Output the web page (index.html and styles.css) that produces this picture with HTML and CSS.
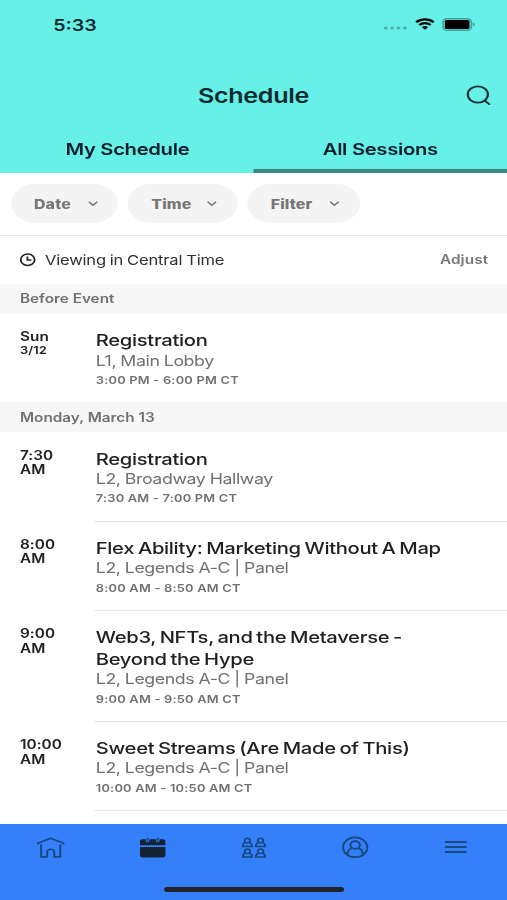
FILE: index.html
```html
<!DOCTYPE html>
<html lang="en">
<head>
<meta charset="utf-8">
<title>Schedule</title>
<link rel="stylesheet" href="styles.css">
</head>
<body>
<div class="app">
  <header class="header">
    <div class="status">
      <span class="clock">5:33</span>
      <span class="signals">
        <svg class="dots" width="20" height="4" viewBox="0 0 20 4"><g fill="#4aaeaa"><circle cx="2" cy="2" r="1.6"/><circle cx="7.2" cy="2" r="1.6"/><circle cx="12.4" cy="2" r="1.6"/><circle cx="17.6" cy="2" r="1.6"/></g></svg>
        <svg class="wifi" width="16" height="12" viewBox="0 0 16 12"><g fill="none" stroke="#000" stroke-width="2.1"><path d="M.8 4.3a10.3 10.3 0 0 1 14.4 0"/><path d="M3.4 7a6.6 6.6 0 0 1 9.2 0"/></g><path d="M8 11.8 5.5 9.2a3.7 3.7 0 0 1 5 0z"/></svg>
        <svg class="battery" width="27" height="13" viewBox="0 0 27 13"><rect x=".7" y=".7" width="23.2" height="11.6" rx="3.6" fill="none" stroke="#3fa09d" stroke-width="1.4"/><rect x="2.2" y="2" width="20.2" height="9" rx="1.6"/><path d="M25.2 4.6v3.8q1.4-.7 1.4-1.9t-1.4-1.9z" fill="#3fa09d"/></svg>
      </span>
    </div>
    <div class="titlebar">
      <h1>Schedule</h1>
      <svg class="search" width="22" height="22" viewBox="0 0 22 22" fill="none" stroke="#14302f" stroke-width="1.8" stroke-linecap="round"><circle cx="10.2" cy="9.5" r="8.2"/><path d="m15.5 15.4 4 3.7"/></svg>
    </div>
    <nav class="tabs"><span class="tab my">My Schedule</span><span class="tab all">All Sessions</span></nav>
  </header>
  <div class="filters">
    <span class="pill date">Date<svg width="8" height="6" viewBox="0 0 8 6"><path d="m.5.7 3.5 3.6L7.5.7"/></svg></span>
    <span class="pill time-filter">Time<svg width="8" height="6" viewBox="0 0 8 6"><path d="m.5.7 3.5 3.6L7.5.7"/></svg></span>
    <span class="pill more">Filter<svg width="8" height="6" viewBox="0 0 8 6"><path d="m.5.7 3.5 3.6L7.5.7"/></svg></span>
  </div>
  <div class="zone">
    <svg width="14" height="14" viewBox="0 0 14 14" fill="none" stroke="#222" stroke-width="1.5"><circle cx="6.6" cy="6.7" r="5.7"/><path d="M6.4 3.5v3.6h3.2"/></svg>
    <span class="zone-name">Viewing in Central Time</span><span class="adjust">Adjust</span>
  </div>
  <h2>Before Event</h2>
  <article class="session first">
    <div class="when">Sun<small>3/12</small></div>
    <div class="info"><h3>Registration</h3><p class="place">L1, Main Lobby</p><p class="hours">3:00 PM - 6:00 PM CT</p></div>
  </article>
  <h2 class="monday">Monday, March 13</h2>
  <article class="session">
    <div class="when">7:30<br>AM</div>
    <div class="info"><h3>Registration</h3><p class="place">L2, Broadway Hallway</p><p class="hours">7:30 AM - 7:00 PM CT</p></div>
  </article>
  <article class="session ruled">
    <div class="when">8:00<br>AM</div>
    <div class="info"><h3>Flex Ability: Marketing Without A Map</h3><p class="place">L2, Legends A-C | Panel</p><p class="hours">8:00 AM - 8:50 AM CT</p></div>
  </article>
  <article class="session ruled long">
    <div class="when">9:00<br>AM</div>
    <div class="info"><h3>Web3, NFTs, and the Metaverse -<br>Beyond the Hype</h3><p class="place">L2, Legends A-C | Panel</p><p class="hours">9:00 AM - 9:50 AM CT</p></div>
  </article>
  <article class="session ruled">
    <div class="when">10:00<br>AM</div>
    <div class="info"><h3>Sweet Streams (Are Made of This)</h3><p class="place">L2, Legends A-C | Panel</p><p class="hours">10:00 AM - 10:50 AM CT</p></div>
  </article>
  <div class="session ruled next"><div class="when"></div><div class="info"></div></div>
  <footer class="bottom">
    <div class="icons">
      <svg width="28" height="24" viewBox="0 0 28 24" fill="none" stroke="#194780" stroke-width="1.6" stroke-linejoin="round"><path d="M6.6 8.2v12.7h4.9v-4.9a2.9 2.7 0 0 1 5.8 0v4.9h4.9V8.2M4 8.6V7.1L14.4 2.2l10.4 4.9v1.5"/></svg>
      <svg width="28" height="24" viewBox="0 0 28 24" fill="#152231"><path d="M4.3 9.3V5q0-1.8 1.8-1.8h2.9v1.6a1.5 1.8 0 0 0 3 0V3.2h5.4v1.6a1.5 1.8 0 0 0 3 0V3.2h2.9q1.8 0 1.8 1.8v4.3zM4.3 11.1h20.8v8.5q0 1.8-1.8 1.8H6.1q-1.8 0-1.8-1.8z"/><path d="M10.5 2.3v3M18.9 2.3v3" stroke="#194780" stroke-width="1.5" stroke-linecap="round"/></svg>
      <svg width="28" height="24" viewBox="0 0 28 24"><defs><g id="person" fill="none" stroke="#194780" stroke-width="1.5"><circle cx="4.7" cy="3.3" r="2.3"/><path d="M3.1 5.1Q.9 6 .9 9.2h7.6Q8.5 6 6.3 5.1"/></g></defs><use href="#person" x="4.3" y="1.3"/><use href="#person" x="15" y="1.3"/><use href="#person" x="4.3" y="11.9"/><use href="#person" x="15" y="11.9"/></svg>
      <svg width="28" height="24" viewBox="0 0 28 24" fill="none" stroke="#194780" stroke-width="1.7"><circle cx="14" cy="11.3" r="9.9"/><circle cx="14" cy="9" r="3.9"/><path d="M7.7 18.5q.3-5.6 4.1-6.5m4.4 0q3.8.9 4.1 6.5"/></svg>
      <svg width="28" height="24" viewBox="0 0 28 24" stroke="#194780" stroke-width="1.8" stroke-linecap="round"><path d="M6 6h16.4M6 11h16.4M6 16h16.4"/></svg>
    </div>
    <div class="home"></div>
  </footer>
</div>
</body>
</html>
```
FILE: styles.css
```css
* { box-sizing: border-box; }
html, body { margin: 0; width: 507px; height: 900px; overflow: hidden; background: #fff; }
/* 414-unit wide layout stretched to fill the window */
.app { width: 414px; height: 900px; display: flex; flex-direction: column; transform: scaleX(1.22464); transform-origin: 0 0; font-family: Inter, "Liberation Sans", sans-serif; color: #202020; white-space: nowrap; overflow: hidden; }
h1, h2, h3, p { margin: 0; }
svg { display: block; flex: none; }
.header { flex: none; height: 172.5px; background: #66f0e8; color: #0b2a2c; }
.status { height: 72px; padding: 14px 26px 0 43.5px; display: flex; justify-content: space-between; align-items: flex-start; }
.clock { font-size: 16px; line-height: 22px; font-weight: 600; }
.signals { display: flex; align-items: center; padding-top: 3.7px; }
.dots { margin: 8px 5.5px 0 0; }
.wifi { margin-right: 6.5px; }
.titlebar { height: 47px; display: grid; grid-template-columns: 34px 1fr 34px; align-items: center; }
h1 { grid-column: 2; text-align: center; font-size: 20.5px; font-weight: 600; letter-spacing: -.27px; }
.search { width: 22px; }
.tabs { height: 53.5px; display: grid; grid-template-columns: 1fr 1fr; }
.tab { text-align: center; font-size: 16.5px; line-height: 24px; padding-top: 17.5px; font-weight: 600; color: #0b1c2b; letter-spacing: -.25px; }
.my { padding-left: 1px; }
.all { border-bottom: 4px solid #3c8a88; }
.filters { flex: none; height: 63px; padding: 11.5px 8.5px; display: flex; gap: 8px; border-bottom: 1px solid #e8e8e8; }
.pill { height: 39px; width: 87.8px; border-radius: 20px; background: #f4f4f4; padding: 0 16.7px 0 19.2px; display: flex; align-items: center; justify-content: space-between; font-size: 13px; font-weight: 800; color: #757575; letter-spacing: .15px; }
.pill svg { fill: none; stroke: #777; stroke-width: 1.3; }
.time-filter { width: 89.5px; }
.more { width: 92px; }
.zone { flex: none; height: 48.5px; display: flex; align-items: center; padding: 0 15.3px 0 15.5px; }
.zone-name { margin-left: 7.2px; font-size: 13.5px; color: #303030; letter-spacing: -.14px; word-spacing: -.5px; }
.adjust { margin-left: auto; font-size: 12.5px; font-weight: 600; color: #777; letter-spacing: .1px; }
h2 { flex: none; height: 30px; padding-left: 16.3px; background: #f7f7f7; font-size: 12.5px; line-height: 29px; font-weight: 600; color: #707070; }
.monday { line-height: 31px; }
.session { flex: none; height: 88.5px; display: flex; }
.session.first { height: 88px; }
.when { width: 77px; padding: 16.5px 0 0 16.3px; font-size: 12.5px; line-height: 14.7px; font-weight: 600; letter-spacing: .05px; }
.first .when { padding-top: 15.5px; }
.when small { display: block; font-size: 10.5px; line-height: 14px; letter-spacing: .1px; }
.info { flex: 1; padding: 16.5px 0 0 1.2px; }
.first .info { padding-top: 16px; }
.session.ruled { height: 89.5px; }
.ruled .when { padding-top: 17px; }
.ruled .info { padding-top: 16.2px; border-top: 1px solid #e6e6e6; }
.session.ruled.long { height: 110.8px; }
.session.ruled.next { height: 13.8px; }
h3 { margin-bottom: -1px; font-size: 16.5px; line-height: 21.5px; font-weight: 500; letter-spacing: -.26px; word-spacing: -1.1px; }
.place { font-size: 14.5px; line-height: 20.4px; color: #707070; letter-spacing: -.33px; word-spacing: -.3px; }
.hours { font-size: 10.5px; line-height: 20.2px; font-weight: 600; color: #707070; letter-spacing: .17px; }
.bottom { flex: 1; background: #3480fa; display: flex; flex-direction: column; }
.icons { display: flex; justify-content: space-between; padding: 12px 27.5px 0 27.3px; }
.icons svg { width: 28px; }
.home { width: 147.5px; height: 5px; border-radius: 3px; background: #202329; margin: 27.2px 0 0 133.7px; }
```
